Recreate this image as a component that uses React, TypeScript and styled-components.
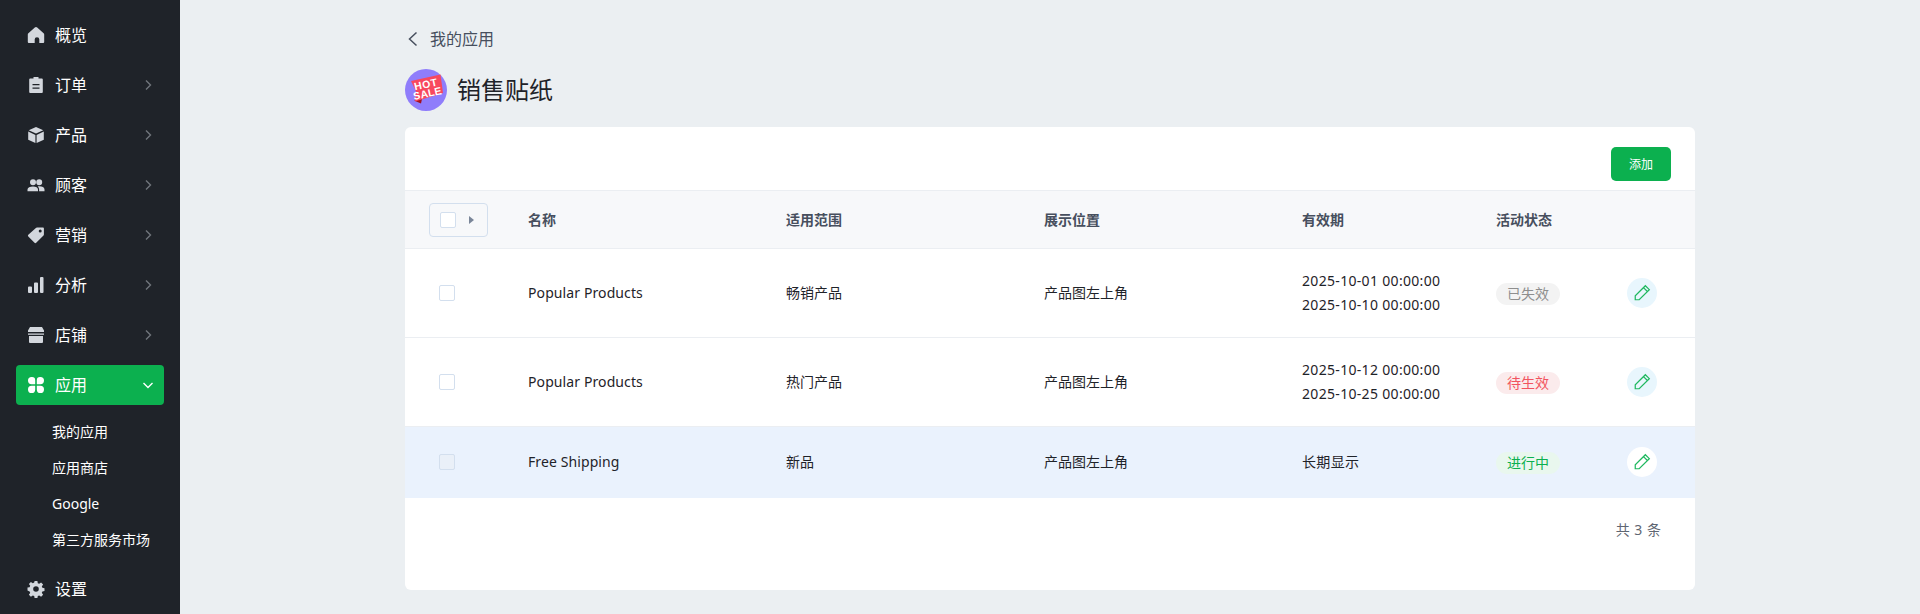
import React from "react";
import styled, { createGlobalStyle } from "styled-components";

const GlobalStyle = createGlobalStyle`
  html, body {
    margin: 0;
    padding: 0;
    background: #ebeff2;
    font-family: "Noto Sans", "Noto Sans CJK SC", sans-serif;
    color: #1f2329;
  }
  * { box-sizing: border-box; }
`;

const Layout = styled.div`
  display: flex;
  width: 1920px;
  height: 614px;
  overflow: hidden;
`;

const Sidebar = styled.aside`
  flex: 0 0 180px;
  background: #1f2329;
  padding: 15px 16px 0;
  display: flex;
  flex-direction: column;
  gap: 10px;
`;

const NavItem = styled.div<{ $active?: boolean }>`
  height: 40px;
  flex: 0 0 40px;
  display: flex;
  align-items: center;
  padding-left: 11px;
  border-radius: 4px;
  font-size: 16px;
  color: #fff;
  background: ${(p) => (p.$active ? "#0cb04f" : "transparent")};
`;

const NavIcon = styled.svg<{ $active?: boolean }>`
  width: 18px;
  height: 18px;
  margin-right: 10px;
  fill: ${(p) => (p.$active ? "#fff" : "#d3d7dd")};
`;

const NavLabel = styled.span`
  flex: 1;
  padding-bottom: 2px;
`;

const Chevron = styled.svg<{ $open?: boolean }>`
  width: 12px;
  height: 12px;
  margin-right: 10px;
  fill: none;
  stroke: ${(p) => (p.$open ? "#fff" : "#70757b")};
  stroke-width: 1.4;
`;

const SubList = styled.div`
  display: flex;
  flex-direction: column;
`;

const SubItem = styled.div`
  height: 36px;
  line-height: 34px;
  padding-left: 36px;
  font-size: 14px;
  color: #fff;
`;

const Main = styled.main`
  flex: 1;
  padding: 0 225px;
`;

const Breadcrumb = styled.div`
  height: 24px;
  margin-top: 27px;
  display: flex;
  align-items: center;
  font-size: 16px;
  line-height: 22px;
  color: #474f5e;
`;

const BackIcon = styled.svg`
  width: 12px;
  height: 16px;
  margin: 0 12px 0 1px;
  fill: none;
  stroke: #474f5e;
  stroke-width: 1.5;
`;

const TitleRow = styled.div`
  display: flex;
  align-items: center;
  gap: 10px;
  height: 42px;
  margin-top: 18px;
`;

const Title = styled.h1`
  margin: 0;
  padding-bottom: 4px;
  font-size: 24px;
  font-weight: 400;
  color: #1f2329;
`;

const Card = styled.section`
  margin-top: 16px;
  height: 463px;
  background: #fff;
  border-radius: 6px;
  overflow: hidden;
`;

const Toolbar = styled.div`
  height: 63px;
  padding: 20px 24px 0 0;
  display: flex;
  justify-content: flex-end;
  align-items: flex-start;
`;

const AddButton = styled.button`
  width: 60px;
  height: 34px;
  border: none;
  border-radius: 5px;
  background: #0cb04f;
  color: #fff;
  font-family: inherit;
  font-size: 12px;
  padding: 0;
`;

const Row = styled.div<{ $height: number; $head?: boolean; $selected?: boolean }>`
  display: grid;
  grid-template-columns: 123px 258px 258px 258px 194px 131px 1fr;
  align-items: center;
  height: ${(p) => p.$height}px;
  padding-bottom: ${(p) => (p.$selected ? 1 : 0)}px;
  font-size: 14px;
  font-weight: ${(p) => (p.$head ? 700 : 400)};
  color: ${(p) => (p.$head ? "#474f5e" : "#1f2329")};
  background: ${(p) => (p.$head ? "#f7f8fa" : p.$selected ? "#eaf2fd" : "#fff")};
  border-top: ${(p) => (p.$head ? "1px solid #ebeef2" : "none")};
  border-bottom: ${(p) => (p.$selected ? "none" : "1px solid #ebeef2")};
`;

const Cell = styled.div`
  line-height: 24px;
`;

const NameCell = styled(Cell)`
  letter-spacing: 0.1px;
`;

const DateLine = styled.div`
  letter-spacing: 0.32px;
`;

const CheckCell = styled.div`
  padding-left: 34px;
`;

const HeadSelect = styled.div`
  width: 59px;
  height: 34px;
  margin-left: 24px;
  border: 1px solid #d3dfee;
  border-radius: 4px;
  display: flex;
  align-items: center;
  padding-left: 10px;
`;

const Check = styled.span<{ $tinted?: boolean }>`
  display: block;
  width: 16px;
  height: 16px;
  border: 1px solid #d3dfee;
  border-radius: 2px;
  background: ${(p) => (p.$tinted ? "#eaf0f8" : "#fff")};
`;

const Caret = styled.span`
  width: 0;
  height: 0;
  margin-left: 13px;
  border-left: 5px solid #7a8699;
  border-top: 4px solid transparent;
  border-bottom: 4px solid transparent;
`;

const tones = {
  gray: ["#f3f3f3", "#8e8e8e"],
  red: ["#fbebec", "#f2545f"],
  green: ["#e9f7ee", "#0cb04f"],
};

const Status = styled.span<{ $tone: keyof typeof tones }>`
  display: inline-flex;
  align-items: center;
  justify-content: center;
  width: 64px;
  height: 22px;
  border-radius: 11px;
  font-size: 14px;
  line-height: 20px;
  vertical-align: middle;
  background: ${(p) => tones[p.$tone][0]};
  color: ${(p) => tones[p.$tone][1]};
`;

const EditButton = styled.span<{ $selected?: boolean }>`
  display: flex;
  align-items: center;
  justify-content: center;
  width: 30px;
  height: 30px;
  border-radius: 50%;
  background: ${(p) => (p.$selected ? "#fff" : "#e8f6fd")};
`;

const Pencil = styled.svg`
  width: 18px;
  height: 18px;
  fill: none;
  stroke: #1fb85f;
  stroke-width: 1.1;
`;

const Footer = styled.div`
  display: flex;
  justify-content: flex-end;
  padding: 21px 34px 0 0;
  font-size: 14px;
  line-height: 22px;
  color: #5f6672;
  word-spacing: 1px;
`;

const nav = [
  {
    label: "概览",
    path: "M7.8 1.6a1.9 1.9 0 0 1 2.4 0l6.4 5.6c.4.3.6.8.6 1.3V16a1 1 0 0 1-1 1h-3.9v-3.4a2.3 2.3 0 0 0-4.6 0V17H1.8a1 1 0 0 1-1-1V8.5c0-.5.2-1 .6-1.3Z",
  },
  {
    label: "订单",
    arrow: true,
    path: "M6.5 1h5v1.6h3.3a1 1 0 0 1 1 1V16a1 1 0 0 1-1 1H3.2a1 1 0 0 1-1-1V3.6a1 1 0 0 1 1-1h3.3ZM5.5 8v1.3h7V8Zm0 3.4v1.3h7v-1.3Z",
  },
  {
    label: "产品",
    arrow: true,
    path: "M9 1 16.3 4.3 9 7.6 1.7 4.3ZM1.2 5.6 8.4 8.9V17L1.2 13.7ZM16.8 5.6V13.7L9.6 17V8.9Z",
  },
  {
    label: "顾客",
    arrow: true,
    path: "M6 3.2a3 3 0 1 1 0 6 3 3 0 0 1 0-6Zm6.2 0a3 3 0 1 1 0 6 3 3 0 0 1 0-6ZM.5 15.2v-1.8C.5 11.5 3 10.4 6 10.4s5 1.1 5 3v1.8Zm11.6 0v-1.8c0-1.2-.5-2.2-1.4-3 .6-.1 1.1-.1 1.6-.1 2.9 0 5.2 1.1 5.2 3.1v1.8Z",
  },
  {
    label: "营销",
    arrow: true,
    path: "M10 1.5h6a.9.9 0 0 1 .9.9v6a1.5 1.5 0 0 1-.4 1L9.2 16.7a1.2 1.2 0 0 1-1.7 0l-6.2-6.2a1.2 1.2 0 0 1 0-1.7L8.9 1.9a1.5 1.5 0 0 1 1.1-.4Zm3.2 2.1a1.5 1.5 0 1 0 0 3 1.5 1.5 0 0 0 0-3Z",
  },
  {
    label: "分析",
    arrow: true,
    path: "M2 10.5h2a1 1 0 0 1 1 1V16a1 1 0 0 1-1 1H2a1 1 0 0 1-1-1v-4.5a1 1 0 0 1 1-1Zm6-4h2a1 1 0 0 1 1 1V16a1 1 0 0 1-1 1H8a1 1 0 0 1-1-1V7.5a1 1 0 0 1 1-1Zm6-5.5h1.5a1 1 0 0 1 1 1V16a1 1 0 0 1-1 1H14a1 1 0 0 1-1-1V2a1 1 0 0 1 1-1Z",
  },
  {
    label: "店铺",
    arrow: true,
    path: "M3 1h12l2 3.4V6H1V4.4ZM1 7.4h16v1.3H1ZM2 10h14v6a1 1 0 0 1-1 1H3a1 1 0 0 1-1-1Z",
  },
];

const appsPath =
  "M4.6 1h.4a3.2 3.2 0 0 1 3.2 3.2V8.2H4.6a3.6 3.6 0 0 1 0-7.2Zm8.8 0a3.6 3.6 0 0 1 0 7.2H9.8V4.2A3.2 3.2 0 0 1 13 1ZM4.6 9.8h3.6v3.6a3.6 3.6 0 1 1-3.6-3.6Zm5.2 0h3.6a3.6 3.6 0 1 1-3.6 3.6Z";

const gearPath =
  "M7.6 1h2.8l.4 2.2 1.4.6 1.9-1.3 2 2-1.3 1.9.6 1.4 2.1.4v2.8l-2.1.4-.6 1.4 1.3 1.9-2 2-1.9-1.3-1.4.6-.4 2.1H7.6l-.4-2.1-1.4-.6-1.9 1.3-2-2 1.3-1.9-.6-1.4L.5 10.4V7.6l2.1-.4.6-1.4L1.9 3.9l2-2 1.9 1.3 1.4-.6ZM9 6.2a2.8 2.8 0 1 0 0 5.6 2.8 2.8 0 0 0 0-5.6Z";

const subItems = ["我的应用", "应用商店", "Google", "第三方服务市场"];

const rows: {
  name: string;
  scope: string;
  dates: string[];
  status: string;
  tone: keyof typeof tones;
  selected?: boolean;
}[] = [
  {
    name: "Popular Products",
    scope: "畅销产品",
    dates: ["2025-10-01 00:00:00", "2025-10-10 00:00:00"],
    status: "已失效",
    tone: "gray",
  },
  {
    name: "Popular Products",
    scope: "热门产品",
    dates: ["2025-10-12 00:00:00", "2025-10-25 00:00:00"],
    status: "待生效",
    tone: "red",
  },
  {
    name: "Free Shipping",
    scope: "新品",
    dates: ["长期显示"],
    status: "进行中",
    tone: "green",
    selected: true,
  },
];

const SaleSticker = () => (
  <svg width="42" height="42" viewBox="0 0 42 42">
    <circle cx="21" cy="21" r="21" fill="#8f7dfb" />
    <path d="M9 31.5l8-1.5-1 4.5Z" fill="#a3101f" />
    <path d="M6 12 35.5 5.5 38 24l-28 8.5 1-10Z" fill="#f8485e" />
    <g fill="#fff" fontFamily="Liberation Sans, sans-serif" fontWeight="700" textAnchor="middle">
      <text x="21.5" y="19" fontSize="10.5" letterSpacing="0.6" transform="rotate(-12 21 18)">
        HOT
      </text>
      <text x="23" y="28" fontSize="10.5" letterSpacing="0.2" transform="rotate(-12 23 27)">
        SALE
      </text>
    </g>
  </svg>
);

const App = () => (
  <Layout>
    <GlobalStyle />
    <Sidebar>
      {nav.map((item) => (
        <NavItem key={item.label}>
          <NavIcon viewBox="0 0 18 18">
            <path d={item.path} />
          </NavIcon>
          <NavLabel>{item.label}</NavLabel>
          {item.arrow && (
            <Chevron viewBox="0 0 12 12">
              <path d="M4 1.5 8.5 6 4 10.5" />
            </Chevron>
          )}
        </NavItem>
      ))}
      <NavItem $active>
        <NavIcon $active viewBox="0 0 18 18">
          <path d={appsPath} />
        </NavIcon>
        <NavLabel>应用</NavLabel>
        <Chevron $open viewBox="0 0 12 12">
          <path d="M1.5 4 6 8.5 10.5 4" />
        </Chevron>
      </NavItem>
      <SubList>
        {subItems.map((s) => (
          <SubItem key={s}>{s}</SubItem>
        ))}
      </SubList>
      <NavItem>
        <NavIcon viewBox="0 0 18 18">
          <path d={gearPath} fillRule="evenodd" />
        </NavIcon>
        <NavLabel>设置</NavLabel>
      </NavItem>
    </Sidebar>
    <Main>
      <Breadcrumb>
        <BackIcon viewBox="0 0 12 16">
          <path d="M10.5 1.5 3.5 8l7 6.5" />
        </BackIcon>
        我的应用
      </Breadcrumb>
      <TitleRow>
        <SaleSticker />
        <Title>销售贴纸</Title>
      </TitleRow>
      <Card>
        <Toolbar>
          <AddButton>添加</AddButton>
        </Toolbar>
        <Row $head $height={59}>
          <HeadSelect>
            <Check />
            <Caret />
          </HeadSelect>
          <Cell>名称</Cell>
          <Cell>适用范围</Cell>
          <Cell>展示位置</Cell>
          <Cell>有效期</Cell>
          <Cell>活动状态</Cell>
        </Row>
        {rows.map((r) => (
          <Row key={r.scope} $height={r.selected ? 71 : 89} $selected={r.selected}>
            <CheckCell>
              <Check $tinted={r.selected} />
            </CheckCell>
            <NameCell>{r.name}</NameCell>
            <Cell>{r.scope}</Cell>
            <Cell>产品图左上角</Cell>
            <Cell>
              {r.dates.map((d) => (
                <DateLine key={d}>{d}</DateLine>
              ))}
            </Cell>
            <Cell>
              <Status $tone={r.tone}>{r.status}</Status>
            </Cell>
            <EditButton $selected={r.selected}>
              <Pencil viewBox="0 0 16 16">
                <path d="M11 1.5 14.5 5 5.5 14H2v-3.5ZM9.3 3.2l3.5 3.5" />
              </Pencil>
            </EditButton>
          </Row>
        ))}
        <Footer>共 3 条</Footer>
      </Card>
    </Main>
  </Layout>
);

export default App;
